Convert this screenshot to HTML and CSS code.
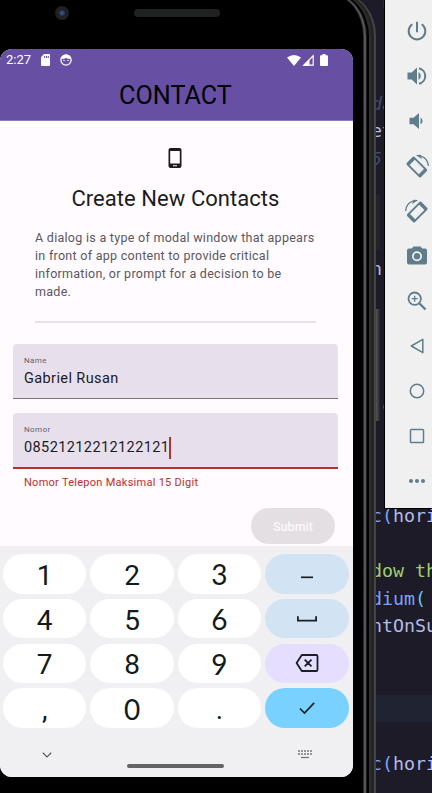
FILE: index.html
```html
<!DOCTYPE html>
<html lang="id">
<head>
<meta charset="utf-8">
<title>Contact</title>
<link rel="stylesheet" href="styles.css">
</head>
<body>
<main class="desktop">
  <section class="editor">
    <div class="line top"><span class="orange">'</span><span class="blue">F</span></div>
    <div class="line"></div>
    <div class="line"></div>
    <div class="line"></div>
    <div class="line comment">da</div>
    <div class="line pale">e<span class="blue">t</span></div>
    <div class="line comment">5<span class="blue">.</span></div>
    <div class="line"></div>
    <div class="line"></div>
    <div class="line"></div>
    <div class="line pale">n<span class="blue">(</span></div>
    <div class="line"></div>
    <div class="line"></div>
    <div class="line"></div>
    <div class="line"></div>
    <div class="line green">]<span class="cyan">c</span></div>
    <div class="line"></div>
    <div class="line"></div>
    <div class="line"></div>
    <div class="line blue">c(<span class="pale">hori</span></div>
    <div class="line"></div>
    <div class="line green">dow th</div>
    <div class="line blue">dium<span class="cyan">(</span></div>
    <div class="line pale">ntOnSu</div>
    <div class="line"></div>
    <div class="line"></div>
    <div class="line current"></div>
    <div class="line"></div>
    <div class="line blue">c(<span class="pale">hori</span></div>
  </section>

  <section class="phone">
    <div class="edge"></div>
    <div class="bezel">
      <span class="camera"></span>
      <span class="speaker"></span>
    </div>
    <div class="screen">
      <header class="appbar">
        <div class="status">
          <span class="clock">2:27</span>
          <svg class="sd" width="9" height="12" viewBox="0 0 9 12"><path fill="#fff" fill-rule="evenodd" d="M3 0h5q1 0 1 1v10q0 1-1 1H1q-1 0-1-1V3.200zM3.200 2v2h1V2zM5 2v2h1V2zM6.800 2v2h1V2z"/></svg>
          <svg class="face" width="12" height="12" viewBox="0 0 12 12"><circle cx="6" cy="6" r="5.100" fill="none" stroke="#fff" stroke-width="1.300"/><path fill="#fff" d="M1 5Q1.500 1 6 .8T11 5Q8.500 5.300 6 3.900 3.500 5.300 1 5z"/><circle cx="4" cy="6.500" r=".7" fill="#fff"/><circle cx="8" cy="6.500" r=".7" fill="#fff"/></svg>
          <span class="grow"></span>
          <svg class="wifi" width="14" height="11" viewBox="0 0 14 11"><path fill="#fff" d="M0 2.600Q7-2.600 14 2.600L7 11z"/></svg>
          <svg class="signal" width="12" height="12" viewBox="0 0 12 12"><path fill="none" stroke="#fff" stroke-width="1.200" d="M1.800 11.200 11.200 1.800v9.400z"/><path fill="#fff" d="M1 11.700 7.500 5v6.700z"/></svg>
          <svg class="battery" width="8" height="12" viewBox="0 0 8 12"><path fill="#fff" d="M2.500 0h3v1.200H7q1 0 1 1V11q0 1-1 1H1q-1 0-1-1V2.200q0-1 1-1h1.500z"/></svg>
        </div>
        <h1 class="apptitle">CONTACT</h1>
      </header>

      <div class="form">
        <svg class="device" width="14" height="20" viewBox="0 0 14 20"><path fill="#1d1b20" fill-rule="evenodd" d="M2.500 0h9Q13.500 0 13.500 2v16q0 2-2 2h-9q-2 0-2-2V2q0-2 2-2zM2.200 3v12.500h9.600V3zM5 17.300v1h4v-1z"/></svg>
        <h2 class="title">Create New Contacts</h2>
        <p class="copy">A dialog is a type of modal window that appears<br>in front of app content to provide critical<br>information, or prompt for a decision to be<br>made.</p>
        <div class="divider"></div>
        <div class="field">
          <span class="label">Name</span>
          <span class="value name">Gabriel Rusan</span>
        </div>
        <div class="field error">
          <span class="label">Nomor</span>
          <span class="value number">08521212212122121<i class="caret"></i></span>
        </div>
        <p class="hint">Nomor Telepon Maksimal 15 Digit</p>
        <button class="submit" disabled>Submit</button>
      </div>

      <div class="keyboard">
        <div class="keys">
          <span class="key">1</span><span class="key">2</span><span class="key round">3</span>
          <span class="key soft"><svg width="12" height="20" viewBox="0 0 12 20"><path stroke="#1a1f22" stroke-width="1.700" d="M0 13.300h12"/></svg></span>
          <span class="key">4</span><span class="key">5</span><span class="key round">6</span>
          <span class="key soft"><svg width="20" height="20" viewBox="0 0 20 20"><path fill="none" stroke="#1a1f22" stroke-width="1.800" d="M.9 7.300v4.400h18.200V7.300"/></svg></span>
          <span class="key">7</span><span class="key">8</span><span class="key round">9</span>
          <span class="key violet"><svg width="24" height="20" viewBox="0 0 24 20"><path fill="none" stroke="#1a1f22" stroke-width="1.800" stroke-linejoin="round" d="M6.800 2h14.400q1.300 0 1.300 1.300v13.400q0 1.300-1.300 1.300H6.800L1.600 10zM9.700 6.600l6.800 6.800M16.500 6.600l-6.800 6.800"/></svg></span>
          <span class="key mark">,</span><span class="key round">0</span><span class="key mark">.</span>
          <span class="key enter"><svg width="16" height="14" viewBox="0 0 16 14"><path fill="none" stroke="#1a1f22" stroke-width="1.700" d="M.9 7.500 5.500 12 15.200 1.800"/></svg></span>
        </div>
        <div class="nav">
          <svg width="10" height="6" viewBox="0 0 10 6"><path fill="none" stroke="#5c5c5e" stroke-width="1.200" d="M.8.800 5 4.900 9.200.800"/></svg>
          <span class="pill"></span>
          <svg width="14" height="9" viewBox="0 0 14 9"><path fill="none" stroke="#77777a" stroke-width="1.500" stroke-dasharray="2 1" d="M0 1h14M0 4h14"/><path stroke="#77777a" stroke-width="1.300" d="M3 7.500h8"/></svg>
        </div>
      </div>
    </div>
    <span class="side power"></span>
    <span class="side volume"></span>
  </section>

  <aside class="toolbar">
    <span class="tool"><svg width="24" height="24" viewBox="0 0 24 24"><path fill="none" stroke="#607d8b" stroke-width="2" d="M12 2.800v10.400M7.300 5.300a8.300 8.300 0 1 0 9.400 0"/></svg></span>
    <span class="tool"><svg width="24" height="24" viewBox="0 0 24 24"><path fill="#607d8b" d="M2.500 8.500h4.200L12 3.500v17l-5.300-5H2.500zM13.500 8a4.600 4.600 0 0 1 0 8z"/><path fill="none" stroke="#607d8b" stroke-width="2" d="M14 4.200a8 8 0 0 1 0 15.600"/></svg></span>
    <span class="tool"><svg width="24" height="24" viewBox="0 0 24 24"><path fill="#607d8b" d="M4.500 8.800h4L14 4v16l-5.500-4.800h-4zM15.500 8.500a4 4 0 0 1 0 7z"/></svg></span>
    <span class="tool"><svg width="26" height="26" viewBox="0 0 26 26"><g transform="rotate(45 12.800 14)"><rect x="2.800" y="8.500" width="20" height="11" rx="1.500" fill="#607d8b"/><path fill="#f0f0f0" d="M6.300 10.300h13v7.400h-13z"/></g><path fill="none" stroke="#607d8b" stroke-width="1.300" d="M13 2.600c5.800-.6 10.800 3.400 11.400 10.400"/><path fill="#607d8b" d="m12 2 4.500-.2 1.500 4.500z"/></svg></span>
    <span class="tool"><svg width="26" height="26" viewBox="0 0 26 26"><g transform="matrix(-1 0 0 1 26 0)"><g transform="rotate(45 12.800 14)"><rect x="2.800" y="8.500" width="20" height="11" rx="1.500" fill="#607d8b"/><path fill="#f0f0f0" d="M6.300 10.300h13v7.400h-13z"/></g><path fill="none" stroke="#607d8b" stroke-width="1.300" d="M13 2.600c5.800-.6 10.800 3.400 11.400 10.400"/><path fill="#607d8b" d="m12 2 4.500-.2 1.500 4.500z"/></g></svg></span>
    <span class="tool"><svg width="24" height="24" viewBox="0 0 24 24"><path fill="#607d8b" fill-rule="evenodd" d="M8.500 2.500h7L17.300 4.500H20q2 0 2 2v12q0 2-2 2H4q-2 0-2-2v-12q0-2 2-2h2.700zM12 7.300a5 5 0 1 0 0 10 5 5 0 0 0 0-10z"/><circle cx="12" cy="12.300" r="3.200" fill="#607d8b"/></svg></span>
    <span class="tool"><svg width="24" height="24" viewBox="0 0 24 24"><g fill="none" stroke="#607d8b"><circle cx="9.700" cy="9.700" r="6.200" stroke-width="1.800"/><path stroke-width="2.300" d="m14.500 14.500 6 6"/><path stroke-width="1.300" d="M9.700 6.700v6M6.700 9.700h6"/></g></svg></span>
    <span class="tool"><svg width="24" height="24" viewBox="0 0 24 24"><path fill="none" stroke="#607d8b" stroke-width="1.500" stroke-linejoin="round" d="M17.800 5.300v13.400L6.300 12z"/></svg></span>
    <span class="tool"><svg width="24" height="24" viewBox="0 0 24 24"><circle cx="12" cy="12" r="6.700" fill="none" stroke="#607d8b" stroke-width="1.500"/></svg></span>
    <span class="tool"><svg width="24" height="24" viewBox="0 0 24 24"><rect x="5.500" y="5.500" width="13" height="13" rx=".8" fill="none" stroke="#607d8b" stroke-width="1.500"/></svg></span>
    <span class="tool"><svg width="24" height="24" viewBox="0 0 24 24"><g fill="#607d8b"><circle cx="6" cy="12" r="2"/><circle cx="12" cy="12" r="2"/><circle cx="18" cy="12" r="2"/></g></svg></span>
  </aside>
</main>
</body>
</html>
```
FILE: styles.css
```css
* { box-sizing: border-box; margin: 0; padding: 0; }
body { font-family: Roboto, sans-serif; background: #1c1b27; }
svg { display: block; flex: none; }
.desktop { position: relative; width: 432px; height: 793px; overflow: hidden; background: #1c1b27; }

/* code editor behind the emulator */
.editor { position: absolute; left: 371px; top: -20.500px; width: 80px; font: 18.300px/27.500px "DejaVu Sans Mono", monospace; }
.line { height: 27.500px; white-space: pre; }
.top { padding-top: 8px; }
.current { background: #202331; }
.comment { color: #414868; font-style: italic; }
.pale { color: #b4bbe8; }
.blue { color: #7aa2f7; }
.cyan { color: #67c7ed; }
.green { color: #9ece6a; }
.orange { color: #ff6a3d; }
.comment .blue { font-style: normal; }

/* phone */
.phone { position: absolute; left: -20px; top: -6px; width: 396px; height: 820px; background: #000; border-radius: 0 34px 0 0 / 0 42px 0 0; }
.bezel { display: flex; align-items: center; height: 55px; padding: 0 0 17px 75px; }
.camera { width: 14px; height: 14px; border-radius: 50%; border: 4px solid #202122; background: radial-gradient(#42598d, #17203d); }
.speaker { width: 86px; height: 8px; margin-left: 65px; border-radius: 4px; background: #202222; }
.edge { position: absolute; right: 0; top: 0; width: 60px; height: 100%; border-radius: 0 34px 0 0 / 0 42px 0 0; box-shadow: inset -2px 0 #444, inset -5px 0 #242424, inset -7px 0 #2d2d2d, inset -9px 0 #000, inset -10px 0 #1b1b1d, inset -12px 0 #55555a, inset -13px 0 #2c2c2e; }
.side { position: absolute; left: 396px; width: 4px; background: linear-gradient(90deg, #555, #252525); }
.power { top: 201px; height: 55px; background: #242424; }
.volume { top: 315px; height: 112px; }
.screen { display: flex; flex-direction: column; width: 353px; height: 728px; margin-left: 20px; border-radius: 12px; overflow: hidden; background: #fffbfe; }
.appbar { flex: none; height: 72px; background: #6750a4; border-bottom: 1px solid #8e7cbb; }
.status { display: flex; align-items: center; height: 22px; padding: 0 25px 0 6px; color: #fff; }
.clock { width: 35px; font-size: 13px; line-height: 22px; }
.face { margin-left: 10px; }
.grow { flex: 1; }
.signal { margin-left: 1px; }
.battery { margin-left: 6px; }
.apptitle { height: 48px; padding-right: 2px; font-size: 25.200px; font-weight: 400; line-height: 49px; text-align: center; color: #000; }

/* form */
.form { display: flex; flex: none; flex-direction: column; height: 425px; padding: 27px 15px 0 13px; }
.device { align-self: center; margin-right: 1px; }
.title { margin-top: 16px; font-size: 22px; font-weight: 400; line-height: 30px; letter-spacing: .050px; text-align: center; color: #1c1b1f; }
.copy { margin: 15px 0 0 22px; font-size: 12.500px; line-height: 18px; letter-spacing: .280px; color: #5a575f; white-space: nowrap; }
.divider { flex: none; height: 2px; margin: 20px 22px 0; background: #e7e0e8; }
.field { display: flex; flex: none; flex-direction: column; height: 55px; margin-top: 21px; padding: 12px 11px 0; border-radius: 4px 4px 0 0; border-bottom: 1px solid #79747e; background: #e7e0ec; }
.error { height: 56px; margin-top: 14px; border-bottom: 2px solid #ba302d; }
.label { font-size: 8px; line-height: 10px; letter-spacing: .4px; color: #625d68; }
.value { display: flex; align-items: center; height: 25px; font-size: 14.500px; letter-spacing: .4px; color: #1c1b1f; }
.caret { width: 2px; height: 22px; background: #ba302d; }
.hint { margin: 6px 0 0 11px; font-size: 11px; line-height: 16px; letter-spacing: .270px; color: #ba302d; white-space: nowrap; }
.submit { align-self: flex-end; flex: none; width: 84px; height: 36px; margin: 17px 3px 0 0; border: 0; border-radius: 18px; background: #e4dfe3; color: #fbf8fc; font: 500 12.500px Roboto, sans-serif; letter-spacing: 0; }

/* number pad */
.keyboard { flex: 1; padding: 8px 4.500px 0 3px; background: #f0f0f2; }
.keys { display: grid; grid-template-columns: repeat(4, 1fr); grid-auto-rows: 39.500px; gap: 5.300px 4px; }
.key { display: flex; align-items: center; justify-content: center; padding-top: 3px; border-radius: 20px; background: #fff; color: #121a1a; font: 28px/39px Roboto, sans-serif; }
.key svg { margin-top: -3px; }
.round { padding-top: 2px; font-family: Lato, sans-serif; }
.soft { background: #d2e4f3; }
.violet { background: #e5deff; }
.enter { background: #78d1ff; }
.nav { display: flex; align-items: center; height: 49px; padding: 5px 36.500px 0 39px; }
.pill { width: 97px; height: 4px; margin: 22px auto 0 75px; border-radius: 2px; background: #646466; }

/* emulator controls */
.toolbar { position: absolute; left: 384px; top: 0; width: 65px; height: 509px; padding-top: 8px; border-left: 1px solid #000; border-bottom: 1px solid #000; background: #f0f0f0; }
.tool { display: flex; align-items: center; justify-content: center; height: 45px; }
```
